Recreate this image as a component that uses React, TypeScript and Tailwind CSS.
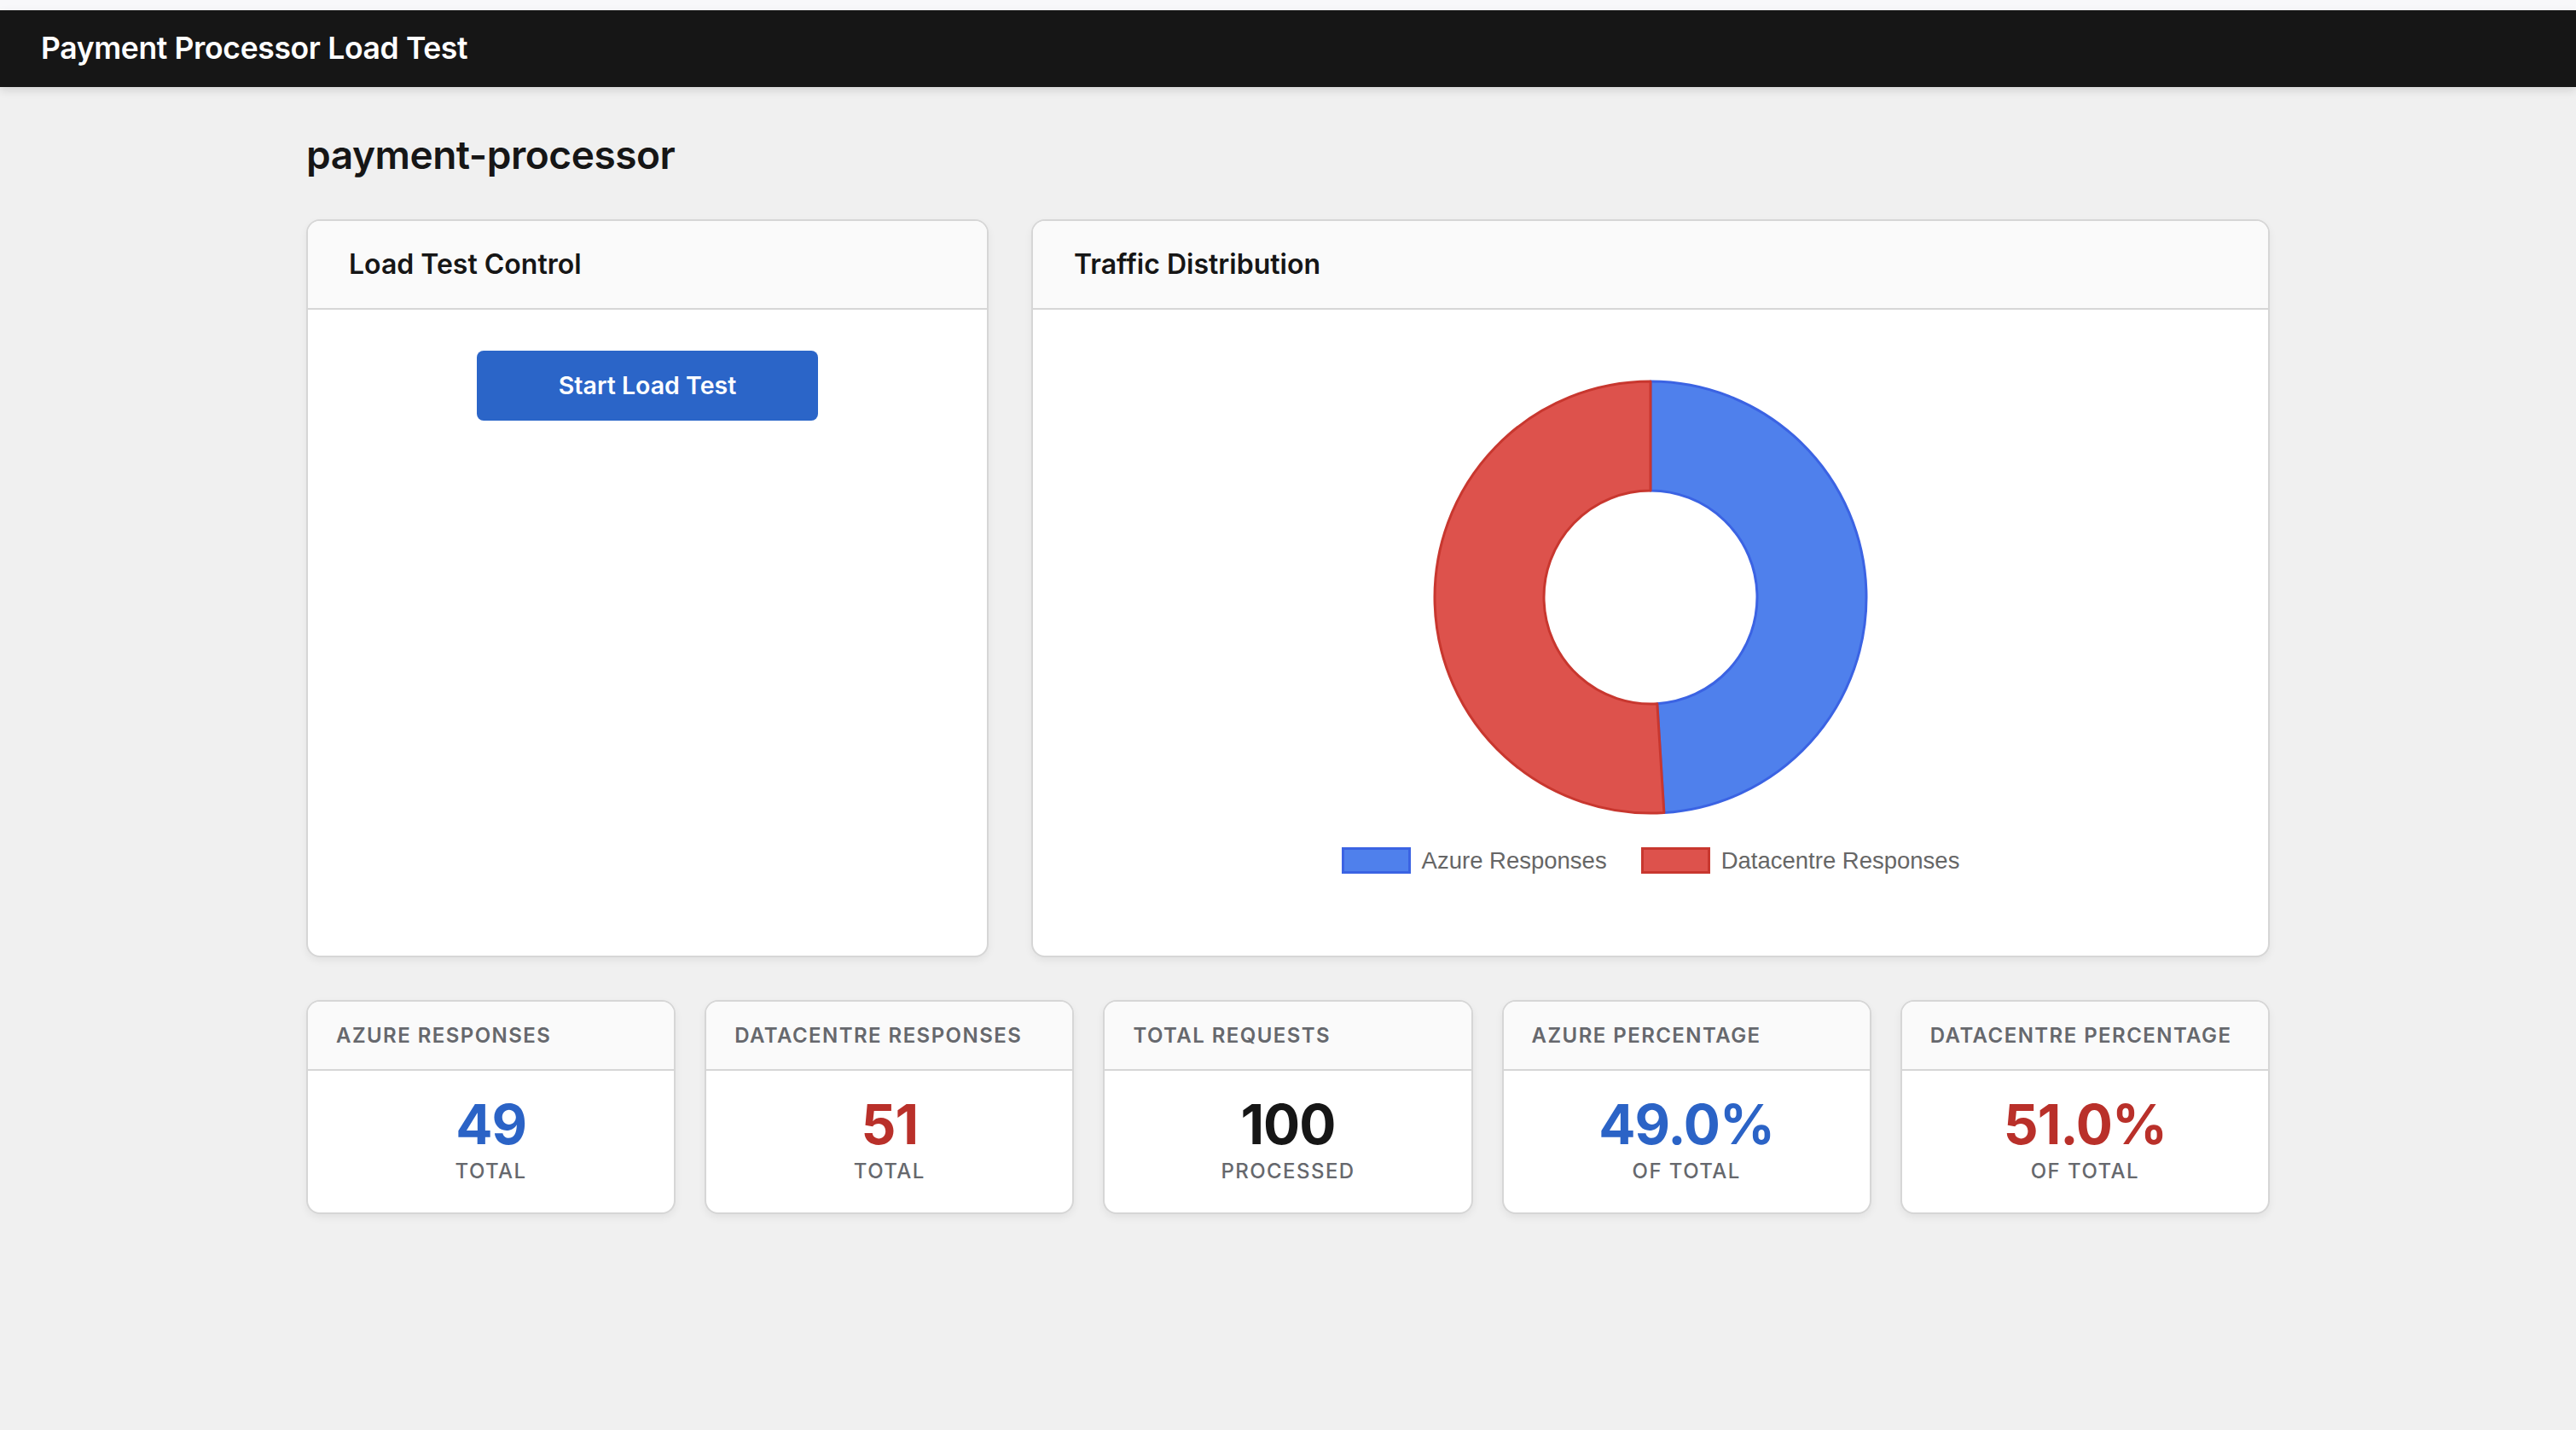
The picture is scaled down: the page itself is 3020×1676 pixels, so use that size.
import React from 'react';

const AZURE = 49;
const DC = 51;

interface Stat {
  label: string;
  value: string;
  sub: string;
  color: string;
}

const stats: Stat[] = [
  { label: 'Azure Responses', value: String(AZURE), sub: 'Total', color: 'text-[#2b63c6]' },
  { label: 'Datacentre Responses', value: String(DC), sub: 'Total', color: 'text-[#b9302a]' },
  { label: 'Total Requests', value: String(AZURE + DC), sub: 'Processed', color: 'text-[#161616]' },
  { label: 'Azure Percentage', value: ((AZURE / (AZURE + DC)) * 100).toFixed(1) + '%', sub: 'Of Total', color: 'text-[#2b63c6]' },
  { label: 'Datacentre Percentage', value: ((DC / (AZURE + DC)) * 100).toFixed(1) + '%', sub: 'Of Total', color: 'text-[#b9302a]' },
];

function pt(r: number, deg: number) {
  const a = (deg * Math.PI) / 180;
  return [r * Math.sin(a), -r * Math.cos(a)];
}

function Donut() {
  const R = 253;
  const r = 125;
  const end = (AZURE / (AZURE + DC)) * 360;
  const [ox, oy] = pt(R, end);
  const [ix, iy] = pt(r, end);
  const blue = `M 0 ${-R} A ${R} ${R} 0 0 1 ${ox} ${oy} L ${ix} ${iy} A ${r} ${r} 0 0 0 0 ${-r} Z`;
  const red = `M ${ox} ${oy} A ${R} ${R} 0 1 1 0 ${-R} L 0 ${-r} A ${r} ${r} 0 1 0 ${ix} ${iy} Z`;
  return (
    <svg width="516" height="516" viewBox="-258 -258 516 516">
      <path d={blue} fill="#4f80ec" stroke="#3b63e3" strokeWidth="3" strokeLinejoin="round" />
      <path d={red} fill="#dd524c" stroke="#c8372f" strokeWidth="3" strokeLinejoin="round" />
    </svg>
  );
}

function Card({ title, children }: { title: string; children: React.ReactNode }) {
  return (
    <div className="flex flex-col bg-white border-2 border-[#d6d6d6] rounded-[16px] overflow-hidden shadow-[0_4px_10px_rgba(0,0,0,0.06)]">
      <div className="h-[104px] flex items-center px-[48px] bg-[#fafafa] border-b-2 border-[#d6d6d6]">
        <h2 className="text-[32px] font-semibold text-[#161616]">{title}</h2>
      </div>
      {children}
    </div>
  );
}

export default function App() {
  return (
    <div className="min-h-screen bg-[#f0f0f0] font-['Inter',sans-serif]">
      <div className="h-[12px] bg-[#f8f8fa]" />
      <header className="h-[90px] bg-[#161616] flex items-center px-[48px] shadow-[0_4px_10px_rgba(0,0,0,0.12)]">
        <h1 className="text-[35.5px] font-semibold text-white tracking-[-0.01em]">Payment Processor Load Test</h1>
      </header>

      <main className="max-w-[2402px] mx-auto px-[50px] pt-[52px] pb-[48px]">
        <h1 className="text-[46px] font-semibold text-[#161616] leading-[1.2] tracking-[-0.01em] mb-[48px]">payment-processor</h1>

        <div className="grid grid-cols-[800px_1fr] gap-[50px] h-[865px]">
          <Card title="Load Test Control">
            <div className="flex justify-center pt-[48px]">
              <button className="w-[400px] h-[82px] rounded-[8px] bg-[#2b65c8] text-white text-[28.5px] font-semibold">
                Start Load Test
              </button>
            </div>
          </Card>

          <Card title="Traffic Distribution">
            <div className="flex flex-col items-center pt-[79px]">
              <Donut />
              <div className="flex items-center gap-[40px] mt-[30px] font-['Liberation_Sans',Arial,sans-serif] text-[27.5px] text-[#666666]">
                <div className="flex items-center gap-[13px]">
                  <span className="w-[81px] h-[31px] bg-[#4f80ec] border-[3px] border-[#3b63e3]" />
                  <span>Azure Responses</span>
                </div>
                <div className="flex items-center gap-[13px]">
                  <span className="w-[81px] h-[31px] bg-[#dd524c] border-[3px] border-[#c8372f]" />
                  <span>Datacentre Responses</span>
                </div>
              </div>
            </div>
          </Card>
        </div>

        <div className="grid grid-cols-5 gap-[34px] mt-[50px]">
          {stats.map((s) => (
            <div key={s.label} className="bg-white border-2 border-[#d6d6d6] rounded-[16px] overflow-hidden shadow-[0_4px_10px_rgba(0,0,0,0.06)]">
              <div className="h-[81px] flex items-center px-[33px] bg-[#fafafa] border-b-2 border-[#d6d6d6]">
                <span className="text-[24px] font-semibold uppercase tracking-[0.06em] text-[#66686d]">{s.label}</span>
              </div>
              <div className="h-[166px] flex flex-col items-center pt-[31px]">
                <div className={`text-[64px] font-bold leading-none tracking-[-0.015em] ${s.color}`}>{s.value}</div>
                <div className="mt-[11px] text-[24px] leading-none font-medium uppercase tracking-[0.06em] text-[#66686d]">{s.sub}</div>
              </div>
            </div>
          ))}
        </div>
      </main>
    </div>
  );
}
